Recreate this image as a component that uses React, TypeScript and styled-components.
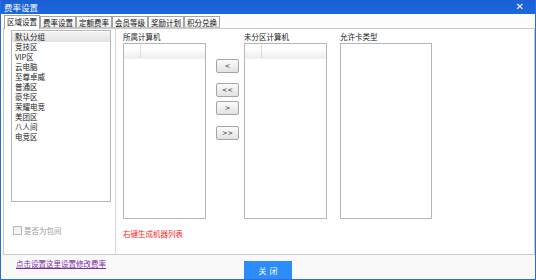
import React, { useState } from 'react';
import styled, { createGlobalStyle } from 'styled-components';

const GlobalStyle = createGlobalStyle`
  html, body {
    margin: 0;
    padding: 0;
    background: #ffffff;
    overflow: hidden;
  }
`;

const Window = styled.div`
  width: 536px;
  height: 280px;
  box-sizing: border-box;
  border: 1px solid #2b6cd8;
  border-top: none;
  display: flex;
  flex-direction: column;
  background: #fbfbfb;
  font-family: "Noto Sans CJK SC", "Liberation Sans", sans-serif;
  font-size: 7.5px;
  color: #202020;
`;

const TitleBar = styled.div`
  height: 14px;
  flex: none;
  display: flex;
  align-items: center;
  padding-left: 3px;
  background: linear-gradient(#1a5fd6, #1d67dc);
  color: #ffffff;
  font-size: 8.5px;
`;

const CloseMark = styled.span`
  margin-left: auto;
  margin-right: 11px;
  font-family: "DejaVu Sans", sans-serif;
  font-weight: bold;
  font-size: 10px;
  line-height: 14px;
`;

const TabStrip = styled.div`
  height: 14px;
  flex: none;
  display: flex;
  align-items: flex-end;
  padding-left: 3px;
  background: #fcfcfc;
  position: relative;
  z-index: 1;
`;

const Tab = styled.div<{ $active?: boolean }>`
  height: ${(p) => (p.$active ? 14 : 12)}px;
  margin-bottom: ${(p) => (p.$active ? -1 : 0)}px;
  box-sizing: border-box;
  padding: 0 2px;
  border: 1px solid #a3a3a3;
  border-bottom: ${(p) => (p.$active ? 'none' : '1px solid #c9c9c9')};
  background: ${(p) => (p.$active ? '#ffffff' : 'linear-gradient(#ffffff, #f0f0f0)')};
  line-height: 11px;
  color: #111;
  white-space: nowrap;
`;

const Body = styled.div`
  height: 227px;
  flex: none;
  box-sizing: border-box;
  margin-left: 2px;
  border: 1px solid #c9c9c9;
  background: #ffffff;
  display: flex;
`;

const LeftPanel = styled.div`
  width: 112px;
  box-sizing: border-box;
  border-right: 1px solid #d6d6d6;
  padding: 1px 0 0 7px;
  display: flex;
  flex-direction: column;
`;

const GroupList = styled.div`
  width: 100px;
  height: 172px;
  box-sizing: border-box;
  border: 1px solid #b4b6bb;
  padding-top: 1px;
`;

const GroupItem = styled.div<{ $selected?: boolean }>`
  height: 10px;
  line-height: 10px;
  padding-left: 3px;
  white-space: nowrap;
  background: ${(p) => (p.$selected ? 'linear-gradient(#f2f2f2, #e3e3e3)' : 'transparent')};
`;

const CheckRow = styled.label`
  display: flex;
  align-items: center;
  gap: 2px;
  margin: 23px 0 0 2px;
  color: #9a9a9a;
`;

const CheckBox = styled.span`
  width: 7px;
  height: 7px;
  border: 1px solid #b8b8b8;
  background: #f4f4f4;
`;

const MainPanel = styled.div`
  flex: 1;
  padding-left: 7px;
  display: flex;
  flex-direction: column;
`;

const Columns = styled.div`
  display: flex;
  align-items: flex-start;
`;

const Column = styled.div<{ $width: number; $gap?: number }>`
  width: ${(p) => p.$width}px;
  margin-left: ${(p) => p.$gap || 0}px;
  display: flex;
  flex-direction: column;
`;

const Label = styled.div`
  height: 14px;
  line-height: 15px;
  white-space: nowrap;
`;

const ListBox = styled.div`
  height: 176px;
  box-sizing: border-box;
  border: 1px solid #b4b6bb;
  background: #ffffff;
`;

const ListHeader = styled.div`
  height: 14px;
  display: flex;
  background: linear-gradient(#ffffff 35%, #eeeeee);
  border-bottom: 1px solid #f2f2f2;
`;

const HeaderCell = styled.div<{ $width?: number }>`
  width: ${(p) => (p.$width ? `${p.$width}px` : 'auto')};
  flex: ${(p) => (p.$width ? 'none' : 1)};
  border-right: ${(p) => (p.$width ? '1px solid #dddddd' : 'none')};
`;

const ButtonColumn = styled.div`
  width: 23px;
  margin-left: 10px;
  padding-top: 30px;
  display: flex;
  flex-direction: column;
`;

const MoveButton = styled.button<{ $top: number }>`
  width: 23px;
  height: 14px;
  margin-top: ${(p) => p.$top}px;
  padding: 0;
  border: 1px solid #a5a5a5;
  border-radius: 2px;
  background: linear-gradient(#fbfbfb, #e2e2e2);
  font-family: "DejaVu Sans", sans-serif;
  font-size: 6.5px;
  line-height: 12px;
  color: #222;
`;

const Hint = styled.div`
  margin-top: 9px;
  color: #ff1a1a;
  line-height: 12px;
`;

const Footer = styled.div`
  flex: 1;
  display: grid;
  grid-template-columns: 1fr 48px 1fr;
  background: #f9f9f9;
`;

const FooterLink = styled.a`
  align-self: start;
  justify-self: start;
  margin: 3px 0 0 15px;
  line-height: 12px;
  color: #7a2c9e;
  text-decoration: underline;
  cursor: pointer;
`;

const CloseButton = styled.button`
  align-self: end;
  height: 18px;
  margin: 0;
  padding: 0;
  border: none;
  background: #2b8cfa;
  color: #ffffff;
  font-family: "Noto Sans CJK SC", sans-serif;
  font-size: 8px;
  letter-spacing: 3px;
  text-indent: 3px;
`;

const tabs = ['区域设置', '费率设置', '定额费率', '会员等级', '奖励计划', '积分兑换'];

const groups = ['默认分组', '竞技区', 'VIP区', '云电脑', '至尊卓威', '普通区', '豪华区', '荣耀电竞', '美团区', '八人间', '电竞区'];

const moves = [
  { label: '<', top: 0 },
  { label: '<<', top: 10 },
  { label: '>', top: 4 },
  { label: '>>', top: 11 },
];

const App: React.FC = () => {
  const [activeTab, setActiveTab] = useState(0);
  const [selected, setSelected] = useState(0);

  return (
    <>
      <GlobalStyle />
      <Window>
        <TitleBar>
          费率设置
          <CloseMark>✕</CloseMark>
        </TitleBar>
        <TabStrip>
          {tabs.map((t, i) => (
            <Tab key={t} $active={i === activeTab} onClick={() => setActiveTab(i)}>
              {t}
            </Tab>
          ))}
        </TabStrip>
        <Body>
          <LeftPanel>
            <GroupList>
              {groups.map((g, i) => (
                <GroupItem key={g} $selected={i === selected} onClick={() => setSelected(i)}>
                  {g}
                </GroupItem>
              ))}
            </GroupList>
            <CheckRow>
              <CheckBox />
              是否为包间
            </CheckRow>
          </LeftPanel>
          <MainPanel>
            <Columns>
              <Column $width={83}>
                <Label>所属计算机</Label>
                <ListBox>
                  <ListHeader>
                    <HeaderCell $width={16} />
                    <HeaderCell />
                  </ListHeader>
                </ListBox>
              </Column>
              <ButtonColumn>
                {moves.map((m) => (
                  <MoveButton key={m.label} $top={m.top}>
                    {m.label}
                  </MoveButton>
                ))}
              </ButtonColumn>
              <Column $width={83} $gap={5}>
                <Label>未分区计算机</Label>
                <ListBox>
                  <ListHeader>
                    <HeaderCell $width={16} />
                    <HeaderCell />
                  </ListHeader>
                </ListBox>
              </Column>
              <Column $width={92} $gap={13}>
                <Label>允许卡类型</Label>
                <ListBox />
              </Column>
            </Columns>
            <Hint>右键生成机器列表</Hint>
          </MainPanel>
        </Body>
        <Footer>
          <FooterLink>点击设置这里设置修改费率</FooterLink>
          <CloseButton>关闭</CloseButton>
        </Footer>
      </Window>
    </>
  );
};

export default App;
